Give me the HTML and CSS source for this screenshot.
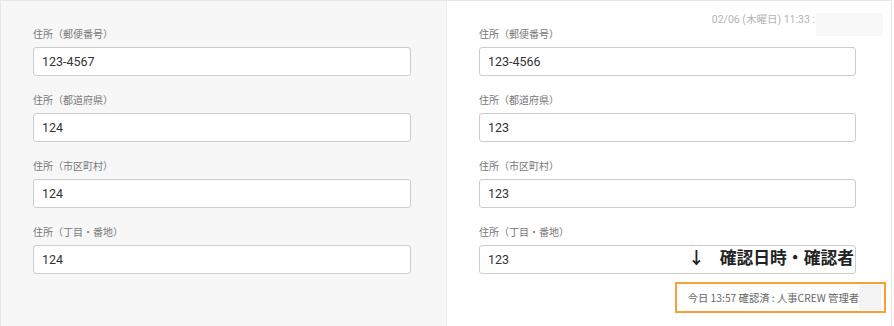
FILE: index.html
```html
<!DOCTYPE html>
<html lang="ja">
<head>
    <meta charset="UTF-8">
    <title>住所 変更確認</title>
    <link rel="stylesheet" href="styles.css">
</head>
<body>
    <div class="compare">
        <!-- before -->
        <div class="panel panel-old">
            <div class="field">
                <label>住所（郵便番号）</label>
                <div class="input">123-4567</div>
            </div>
            <div class="field">
                <label>住所（都道府県）</label>
                <div class="input">124</div>
            </div>
            <div class="field">
                <label>住所（市区町村）</label>
                <div class="input">124</div>
            </div>
            <div class="field">
                <label>住所（丁目・番地）</label>
                <div class="input">124</div>
            </div>
        </div>

        <!-- after -->
        <div class="panel panel-new">
            <div class="stamp">
                <span class="stamp-text">02/06 (木曜日) 11:33 :</span>
                <span class="blur blur-top"></span>
            </div>
            <div class="field">
                <label>住所（郵便番号）</label>
                <div class="input">123-4566</div>
            </div>
            <div class="field">
                <label>住所（都道府県）</label>
                <div class="input">123</div>
            </div>
            <div class="field">
                <label>住所（市区町村）</label>
                <div class="input">123</div>
            </div>
            <div class="field">
                <label>住所（丁目・番地）</label>
                <div class="input">123</div>
                <div class="note"><span class="arrow">↓</span>確認日時・確認者</div>
            </div>
            <div class="confirm">
                <span>今日 13:57 確認済 : 人事CREW 管理者</span>
                <span class="blur blur-name"></span>
            </div>
        </div>
    </div>
</body>
</html>
```

FILE: styles.css
```css
/* Basic Styling */
body {
    margin: 0;
    padding: 0;
    background-color: white;
    font-family: Roboto, "Noto Sans CJK JP", sans-serif;
}

.compare {
    display: flex;
    width: 890px;
    height: 326px;
    border: 1px solid #e6e6e6;
    border-bottom: none;
    overflow: hidden;
}

.panel {
    position: relative;
    padding: 25px 32px 0 32px;
    box-sizing: border-box;
}

.panel-old {
    width: 446px;
    background-color: #f7f7f7;
    border-right: 1px solid #ececec;
    padding-right: 35px;
}

.panel-new {
    width: 443px;
    background-color: white;
    padding-right: 34px;
}

.field {
    position: relative;
    margin-bottom: 16px;
}

label {
    display: block;
    font-family: "Noto Sans CJK JP", sans-serif;
    font-size: 10px;
    line-height: 15px;
    color: #777;
    margin-bottom: 6px;
}

.input {
    height: 27px;
    line-height: 27px;
    padding: 0 8px;
    background-color: white;
    border: 1px solid #cdcdcd;
    border-radius: 3px;
    font-size: 12.5px;
    color: #333;
}

.stamp {
    position: absolute;
    top: 12px;
    right: 7px;
    display: flex;
    align-items: flex-start;
    font-size: 10.5px;
    color: #b4b4b4;
}

.stamp-text {
    line-height: 14px;
}

.blur {
    display: inline-block;
    background-color: #f8f8f9;
}

.blur-top {
    width: 67px;
    height: 23px;
    margin-left: 1px;
}

.note {
    position: absolute;
    right: 2px;
    bottom: 5px;
    font-family: "Noto Sans CJK JP", sans-serif;
    font-size: 16.8px;
    font-weight: bold;
    color: #222;
    line-height: 24px;
}

.arrow {
    margin-right: 15px;
}

.confirm {
    position: absolute;
    top: 281px;
    right: 4px;
    display: flex;
    align-items: center;
    height: 27px;
    padding: 0 3px 0 11px;
    border: 2px solid #f6a035;
    font-family: "Noto Sans CJK JP", sans-serif;
    font-size: 10.3px;
    color: #666;
}

.blur-name {
    width: 22px;
    height: 25px;
    background-color: #f3f3f3;
}
```
